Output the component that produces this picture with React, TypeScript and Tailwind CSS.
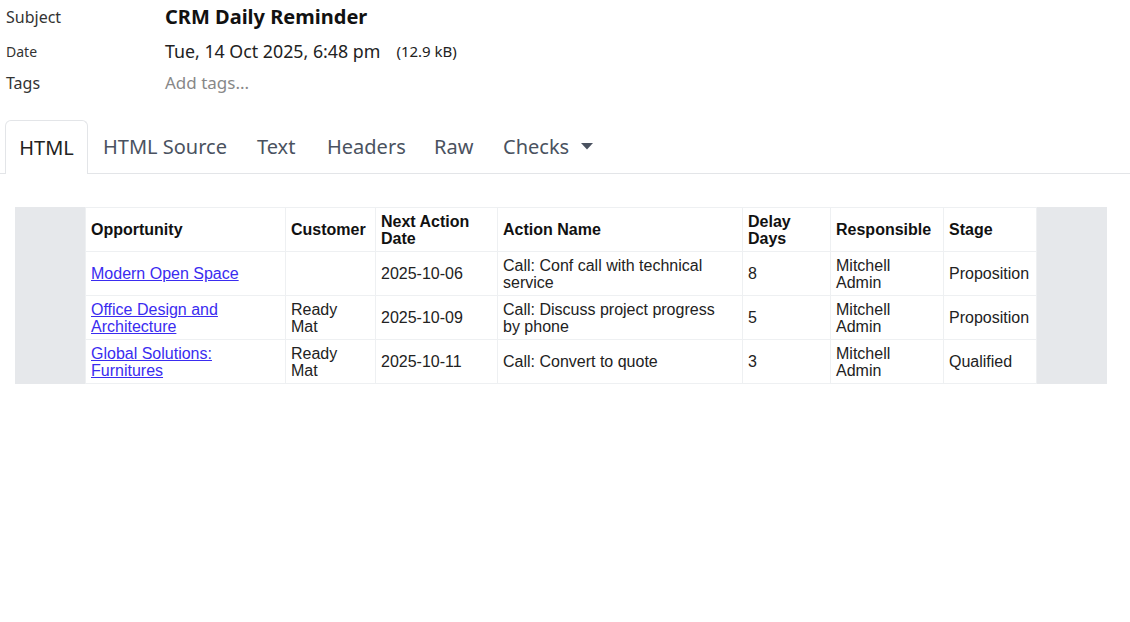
import React from "react";

const rows = [
  {
    opp: "Modern Open Space",
    cust: "",
    date: "2025-10-06",
    action: "Call: Conf call with technical service",
    delay: "8",
    resp: "Mitchell Admin",
    stage: "Proposition",
  },
  {
    opp: "Office Design and Architecture",
    cust: "Ready Mat",
    date: "2025-10-09",
    action: "Call: Discuss project progress by phone",
    delay: "5",
    resp: "Mitchell Admin",
    stage: "Proposition",
  },
  {
    opp: "Global Solutions: Furnitures",
    cust: "Ready Mat",
    date: "2025-10-11",
    action: "Call: Convert to quote",
    delay: "3",
    resp: "Mitchell Admin",
    stage: "Qualified",
  },
];

const ui = { fontFamily: '"Noto Sans", "Open Sans", sans-serif' };
const mail = { fontFamily: '"Liberation Sans", Arial, sans-serif' };

export default function App() {
  return (
    <div className="w-[1130px] h-[622px] bg-white overflow-hidden" style={ui}>
      <div className="flex flex-col pt-[3px]">
        <div className="flex items-center h-[28px]">
          <div className="w-[165px] pl-[6px] text-[16px] text-[#333]">Subject</div>
          <div className="text-[20px] font-bold text-[#111]">CRM Daily Reminder</div>
        </div>
        <div className="flex items-center h-[38px] pt-[2px]">
          <div className="w-[165px] pl-[6px] text-[14px] text-[#333]">Date</div>
          <div className="text-[17.8px] text-[#222]">Tue, 14 Oct 2025, 6:48 pm</div>
          <div className="ml-[16px] text-[15px] text-[#222]">(12.9 kB)</div>
        </div>
        <div className="flex items-center h-[28px]">
          <div className="w-[165px] pl-[6px] text-[16px] text-[#333]">Tags</div>
          <div className="text-[17px] text-[#888]">Add tags...</div>
        </div>
      </div>

      <div className="mt-[23px] flex items-end border-b border-[#e3e5e8] pl-[5px] h-[54px]">
        <div className="h-[54px] w-[83px] pt-[1px] flex items-center justify-center border border-b-0 border-[#e3e5e8] rounded-t-[6px] bg-white -mb-px text-[20px] text-[#222]">
          HTML
        </div>
        <div className="h-[54px] pt-[1px] flex items-center pl-[15px] text-[20px] text-[#4a5260]">
          <span className="w-[154px]">HTML Source</span>
          <span className="w-[70px]">Text</span>
          <span className="w-[107px]">Headers</span>
          <span className="w-[69px]">Raw</span>
          <span className="flex items-center gap-[12px]">
            Checks
            <svg width="12" height="7" viewBox="0 0 12 7">
              <path d="M0 0 L12 0 L6 6.5 Z" fill="#4a5260" />
            </svg>
          </span>
        </div>
      </div>

      <div className="mt-[33px] mx-[15px] w-[1092px] bg-[#e6e8eb] flex justify-center">
        <table
          className="table-fixed border-collapse bg-white text-[16px] leading-[17px] text-[#222]"
          style={mail}
        >
          <colgroup>
            <col className="w-[200px]" />
            <col className="w-[90px]" />
            <col className="w-[122px]" />
            <col className="w-[245px]" />
            <col className="w-[88px]" />
            <col className="w-[113px]" />
            <col className="w-[93px]" />
          </colgroup>
          <thead>
            <tr className="h-[44px]">
              {["Opportunity", "Customer", "Next Action Date", "Action Name", "Delay Days", "Responsible", "Stage"].map(
                (h) => (
                  <th
                    key={h}
                    className="border border-[#eef0f2] px-[5px] py-[4px] text-left font-bold text-[#111] align-middle"
                  >
                    {h}
                  </th>
                )
              )}
            </tr>
          </thead>
          <tbody>
            {rows.map((r) => (
              <tr key={r.opp} className="h-[44px]">
                <td className="border border-[#eef0f2] px-[5px] py-[4px] align-middle">
                  <a href="#" className="text-[#3a2cf0] underline">
                    {r.opp}
                  </a>
                </td>
                <td className="border border-[#eef0f2] pl-[5px] pr-[12px] py-[4px] align-middle">{r.cust}</td>
                <td className="border border-[#eef0f2] px-[5px] py-[4px] align-middle">{r.date}</td>
                <td className="border border-[#eef0f2] pl-[5px] pr-[12px] py-[4px] align-middle">{r.action}</td>
                <td className="border border-[#eef0f2] px-[5px] py-[4px] align-middle">{r.delay}</td>
                <td className="border border-[#eef0f2] px-[5px] py-[4px] align-middle">{r.resp}</td>
                <td className="border border-[#eef0f2] px-[5px] py-[4px] align-middle">{r.stage}</td>
              </tr>
            ))}
          </tbody>
        </table>
      </div>
    </div>
  );
}
